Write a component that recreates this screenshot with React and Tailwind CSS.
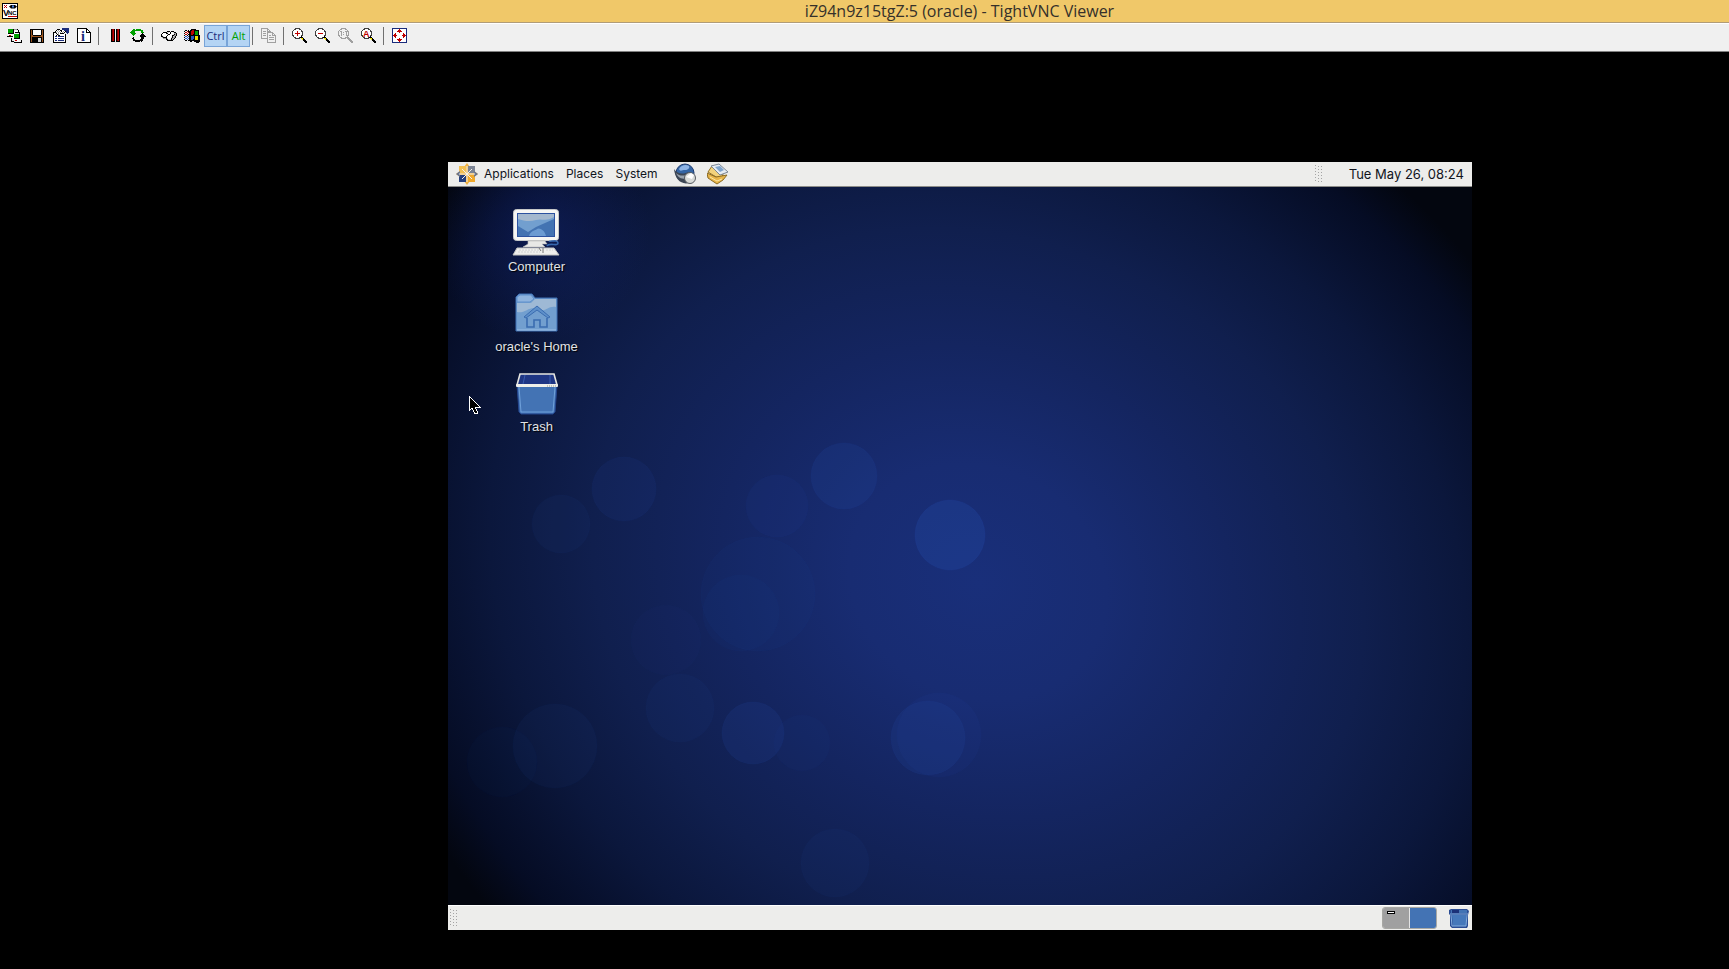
import React from 'react';

const PALETTE = {
  k: '#000000',
  w: '#ffffff',
  g: '#00a000',
  r: '#c00000',
  d: '#800000',
  n: '#1a2c7c',
  b: '#2a56c0',
  o: '#9a5420',
  y: '#f0e000',
  s: '#a0a0a0',
  l: '#d4d4d4',
};

// Every character is one pixel, a dot stays transparent
const PixelIcon = ({ rows, children }) => (
  <svg width="16" height="16" viewBox="0 0 16 16" shapeRendering="crispEdges" aria-hidden="true">
    {rows.map((row, y) =>
      [...row].map((c, x) =>
        PALETTE[c] ? <rect key={`${x}-${y}`} x={x} y={y} width="1" height="1" fill={PALETTE[c]} /> : null
      )
    )}
    {children}
  </svg>
);

const CONNECT = [
  '................',
  '.gggggksssk.....',
  'wgggggk....k....',
  'wgggggkwwwwk....',
  'wgggggkwkkkkk...',
  'wkkkkkkw....k...',
  '.wwww.wgggggk...',
  '..rr..wgggggk...',
  'kkkkkkwgggggk...',
  '......wgggggk...',
  '....k.wkkkkkk...',
  '....k..wwwww....',
  '....k...rrww..k.',
  '....kkk.wwwww.k.',
  '.......kkkkkkkk.',
];

const SAVE = [
  '................',
  'kkkkkkkkkkkkkk..',
  'kokwwwwwwwwkok..',
  'kokwwwwwwwwkok..',
  'kokwwwwwwwwkok..',
  'kokwwwwwwwwkok..',
  'kokwwwwwwwwkok..',
  'kookkkkkkkkook..',
  'kooooooooooook..',
  'kokkkkkkkkkkok..',
  'kokkkkkklllkok..',
  'kokkkkkklllkok..',
  'kokkkkkklllkok..',
  'kokkkkkklllkok..',
  'kkkkkkkkkkkkkk..',
];

const PROPERTIES = [
  '.........nnnnnnn',
  '....kkk..nnnnnnn',
  '...kwswkkwwnnnnn',
  '..kwswswkwswknnn',
  'kkkswswswswk.nnn',
  'kwwkwswkkkk...n.',
  'kwwwkswwwwwwk...',
  'kwwkwkkwwwwwk...',
  'kwnnwnnnnnnwk...',
  'kwwwwwwwwwwwk...',
  'kwnnwnnnnnnwk...',
  'kwwwwwwwwwwwk...',
  'kwnnwnnnnnnwk...',
  'kwwwwwwwwwwwk...',
  'kkkkkkkkkkkkk...',
];

const PAGE = [
  '.kkkkkkkkkk.....',
  '.kwwwwwwwwkk....',
  '.kwwwwwwwwkwk...',
  '.kwwwwwwwwkwwk..',
  '.kwwwwwwwwkkkkk.',
  '.kwwwwwwwwwwwwk.',
  '.kwwwwwwwwwwwwk.',
  '.kwwwwwwwwwwwwk.',
  '.kwwwwwwwwwwwwk.',
  '.kwwwwwwwwwwwwk.',
  '.kwwwwwwwwwwwwk.',
  '.kwwwwwwwwwwwwk.',
  '.kwwwwwwwwwwwwk.',
  '.kwwwwwwwwwwwwk.',
  '.kkkkkkkkkkkkkk.',
];

const PAUSE = [
  '................',
  ...Array(12).fill('....kdrk.kdrk...'),
  '....kkkk.kkkk...',
];

const REFRESH = [
  '................',
  '...gg.ggggg.....',
  '..ggggggggggg...',
  '.gggg......gg...',
  'ggggg......ggg..',
  '.ggggg......k...',
  '..ggg......kkk..',
  '...g......kkkkk.',
  '..........kkkkkk',
  '...k.......kkk..',
  '..kk.......kkk..',
  '...kk.....kkk...',
  '...kkkkkkkkkk...',
  '.....kkkkk.k....',
];

const KEYS = [
  '................',
  '................',
  '................',
  '......kkk.kkk...',
  '..kkkkllwkwwlkk.',
  '.kwwwkkwwkwwwssk',
  'kwwwwwlkkwwwlksk',
  'klwwwwkwwwwkkssk',
  'kklwwkwwwwwklsk.',
  '.skkkkwwwwlkssk.',
  '..sssklwwwkssk..',
  '.....kklllksk...',
  '......kkkkkk....',
  '................',
];

const WINDOWS = [
  '................',
  '.......kkkkk....',
  '.kk.k.kkrrkkkkk.',
  'k..rkkkrrrkgggk.',
  '.rr.rkkrrrkgggk.',
  'k..r.kkrrrkgggk.',
  '.rr.kkkrrkkgggk.',
  'k..k.kkkkkkkkkkk',
  '.bb.bkkbbbkyyykk',
  'k..b.kkbbbkyyykk',
  '.bb.bkkbbbkyyykk',
  'k..b.kkbbkkyyykk',
  '.kk.kkkkkkkkkkkk',
  '......kk..kkkkkk',
  '............kkk.',
];

const COPY = [
  'sssssss.........',
  's.....ss........',
  's.....s.s.......',
  's.sss.ssss......',
  's.....ssssss....',
  's.sss.s....ss...',
  's.....s....s.s..',
  's.sss.s.ss.ssss.',
  's.....s.......s.',
  's.....s.sssss.s.',
  'sssssss.......s.',
  '......s.sssss.s.',
  '......s.......s.',
  '......s.......s.',
  '......sssssssss.',
];

const FULLSCREEN = [
  'nnnnnnnnnnnnnnn',
  'nwwwwwwrwwwwwwn',
  'nwwwwwrrrwwwwwn',
  'nwwwwrrrrrwwwwn',
  'nwwwwwwrwwwwwwn',
  'nwwrwwwwwwwrwwn',
  'nwrrwwwwwwwrrwn',
  'nrrrrwwwwwrrrrn',
  'nwrrwwwwwwwrrwn',
  'nwwrwwwwwwwrwwn',
  'nwwwwwwrwwwwwwn',
  'nwwwwrrrrrwwwwn',
  'nwwwwwrrrwwwwwn',
  'nwwwwwwrwwwwwwn',
  'nnnnnnnnnnnnnnn',
];

const Magnifier = ({ off, children }) => {
  const ink = off ? '#a0a0a0' : '#000000';
  return (
    <svg width="16" height="16" viewBox="0 0 16 16" shapeRendering="crispEdges" aria-hidden="true">
      <circle cx="5.5" cy="5.5" r="5" fill={off ? '#f0f0f0' : '#ffffff'} stroke={off ? ink : '#404040'} strokeWidth="1" />
      <path d="M9 9L15 15" stroke={ink} strokeWidth="2.4" />
      {!off && <path d="M9 10h2v2h-1v-1h-1z" fill="#f0e000" />}
      {children}
    </svg>
  );
};

const VncLogo = () => (
  <svg width="16" height="16" viewBox="0 0 16 16" aria-hidden="true">
    <rect x="0.5" y="0.5" width="15" height="15" fill="#fff" stroke="#000" />
    <path d="M2 2l3 3M5 2L2 5" stroke="#c00000" strokeWidth="1" />
    <path d="M7 3.500L9 2h4l2 1.500L13 5.500H9z" fill="#000" />
    <rect x="10" y="2.500" width="2" height="2" fill="#4a80e0" />
    <text x="1" y="13" fontSize="9" fontWeight="700" fontFamily="Liberation Sans, sans-serif">V</text>
    <text x="6" y="12" fontSize="6" fontWeight="700" fontFamily="Liberation Sans, sans-serif">NC</text>
    <path d="M6 13.500h9" stroke="#c00000" />
  </svg>
);

const ToolButton = ({ label, children }) => (
  <button type="button" title={label} aria-label={label} className="flex h-[22px] w-[23px] items-center pl-[3px]">
    {children}
  </button>
);

const KeyToggle = ({ className, children }) => (
  <button
    type="button"
    aria-pressed="true"
    className={`flex h-[22px] w-[23px] items-center justify-center border border-[#78a4d8] bg-[#b4d4f4] font-['Open_Sans','Noto_Sans',sans-serif] text-[11px] ${className}`}
  >
    {children}
  </button>
);

const Separator = () => (
  <div className="flex h-[22px] w-2 items-center pl-[2px]">
    <div className="h-[18px] w-px bg-[#707070]" />
  </div>
);

const TitleBar = () => (
  <header className="flex h-[23px] items-center border-b border-[#b09c78] bg-[#f0c869] pl-[2px]">
    <VncLogo />
    <h1 className="flex-1 pl-[172px] text-center font-['Open_Sans','Noto_Sans',sans-serif] text-[16px] leading-5 text-[#35302a]">
      iZ94n9z15tgZ:5 (oracle) - TightVNC Viewer
    </h1>
  </header>
);

const Toolbar = () => (
  <div role="toolbar" className="flex h-[29px] items-start border-b border-t border-b-[#808080] border-t-white bg-[#f0f0f0] pl-1 pt-px">
    <ToolButton label="New connection"><PixelIcon rows={CONNECT} /></ToolButton>
    <ToolButton label="Save session"><PixelIcon rows={SAVE} /></ToolButton>
    <ToolButton label="Connection options"><PixelIcon rows={PROPERTIES} /></ToolButton>
    <ToolButton label="Connection info">
      <PixelIcon rows={PAGE}>
        <text x="5" y="13" fontSize="14" fontWeight="700" fill="#1a2c7c" fontFamily="Liberation Serif, serif">i</text>
      </PixelIcon>
    </ToolButton>
    <Separator />
    <ToolButton label="Pause"><PixelIcon rows={PAUSE} /></ToolButton>
    <ToolButton label="Refresh"><PixelIcon rows={REFRESH} /></ToolButton>
    <Separator />
    <ToolButton label="Send Ctrl-Alt-Del"><PixelIcon rows={KEYS} /></ToolButton>
    <ToolButton label="Send Ctrl-Esc"><PixelIcon rows={WINDOWS} /></ToolButton>
    <KeyToggle className="text-[#1a2c7c]">Ctrl</KeyToggle>
    <KeyToggle className="text-[#00a000]">Alt</KeyToggle>
    <Separator />
    <ToolButton label="Transfer files"><PixelIcon rows={COPY} /></ToolButton>
    <Separator />
    <ToolButton label="Zoom in">
      <Magnifier><path d="M3 5h5v1H3zM5 3h1v5H5z" fill="#c00000" /></Magnifier>
    </ToolButton>
    <ToolButton label="Zoom out">
      <Magnifier><path d="M3 5h5v1H3z" fill="#c00000" /></Magnifier>
    </ToolButton>
    <ToolButton label="Zoom 100%">
      <Magnifier off><path d="M2 3h2v5H3V4H2zM7 3h2v5H8V4H7zM5 4h1v1H5zM5 6h1v1H5z" fill="#a0a0a0" /></Magnifier>
    </ToolButton>
    <ToolButton label="Zoom auto">
      <Magnifier>
        <text x="2" y="9" fontSize="9" fontWeight="700" fill="#c00000" fontFamily="Liberation Sans, sans-serif">A</text>
      </Magnifier>
    </ToolButton>
    <Separator />
    <ToolButton label="Full screen"><PixelIcon rows={FULLSCREEN} /></ToolButton>
  </div>
);

const BUBBLES = [
  { x: 176, y: 327, r: 32, o: 0.1 },
  { x: 113, y: 362, r: 29, o: 0.07 },
  { x: 329, y: 344, r: 31, o: 0.08 },
  { x: 396, y: 314, r: 33, o: 0.16 },
  { x: 502, y: 373, r: 35, o: 0.26 },
  { x: 293, y: 451, r: 38, o: 0.06 },
  { x: 310, y: 432, r: 57, o: 0.06 },
  { x: 218, y: 478, r: 35, o: 0.04 },
  { x: 232, y: 546, r: 34, o: 0.07 },
  { x: 305, y: 571, r: 31, o: 0.15 },
  { x: 354, y: 581, r: 28, o: 0.05 },
  { x: 107, y: 584, r: 42, o: 0.07 },
  { x: 54, y: 600, r: 35, o: 0.03 },
  { x: 480, y: 576, r: 37, o: 0.15 },
  { x: 491, y: 573, r: 42, o: 0.08 },
  { x: 387, y: 701, r: 34, o: 0.07 },
];

const Wallpaper = () => (
  <svg className="absolute inset-0 h-full w-full" viewBox="0 0 1024 768" preserveAspectRatio="none" aria-hidden="true">
    <defs>
      <radialGradient id="sky" gradientUnits="userSpaceOnUse" cx="0" cy="0" r="1" gradientTransform="translate(530 420) rotate(27) scale(660 570)">
        <stop offset="0" stopColor="#192f7a" />
        <stop offset="0.2" stopColor="#182c72" />
        <stop offset="0.4" stopColor="#142560" />
        <stop offset="0.6" stopColor="#101f4e" />
        <stop offset="0.76" stopColor="#0b173c" />
        <stop offset="0.92" stopColor="#050c24" />
        <stop offset="1" stopColor="#03060f" />
      </radialGradient>
      <radialGradient id="glow">
        <stop offset="0" stopColor="#14287a" stopOpacity="0.45" />
        <stop offset="1" stopColor="#14287a" stopOpacity="0" />
      </radialGradient>
    </defs>
    <rect width="1024" height="768" fill="url(#sky)" />
    <circle cx="92" cy="70" r="110" fill="url(#glow)" />
    {BUBBLES.map((b) => (
      <circle key={`${b.x}-${b.y}`} cx={b.x} cy={b.y} r={b.r} fill="#2850b0" fillOpacity={b.o} stroke="#2850b0" strokeOpacity={b.o / 2} />
    ))}
  </svg>
);

const Grip = () => (
  <svg width="8" height="22" viewBox="0 0 8 22" shapeRendering="crispEdges" aria-hidden="true">
    {[3, 6, 9, 12, 15, 18].map((y) => (
      <path key={y} d={`M1 ${y - 1}h1v1h-1zM4 ${y}h1v1h-1zM7 ${y}h1v1h-1z`} fill="#a4a4a4" />
    ))}
  </svg>
);

const AppsLogo = () => (
  <svg width="22" height="22" viewBox="0 0 22 22" aria-hidden="true">
    <path d="M11 0l3 4h4v4l4 3-4 3v4h-4l-3 4-3-4H4v-4l-4-3 4-3V4h4z" fill="#efb040" />
    <path d="M3 3h7v7H3z" fill="#f3c052" />
    <path d="M12 3h7v7h-7z" fill="#7c8494" />
    <path d="M3 12h7v7H3z" fill="#26407e" />
    <path d="M12 12h7v7h-7z" fill="#f0a92c" />
    <path d="M0 11l4-3v6zM22 11l-4-3v6z" fill="#6a7690" />
    <path d="M11 3v16M3 11h16M6 6l10 10M16 6L6 16" stroke="#f4f2ea" strokeWidth="1" />
  </svg>
);

const GlobeIcon = () => (
  <svg width="22" height="22" viewBox="0 0 22 22" aria-hidden="true">
    <circle cx="11" cy="10" r="9" fill="#3465a4" stroke="#1c3a6e" />
    <path d="M5 6c2-4 7-5 10-3 1 2-1 4-4 4S6 9 5 6z" fill="#8db4e6" />
    <path d="M0 6c4 6 10 5 15 3l-3 4 3 7c-8 2-14-4-15-14z" fill="#3c4654" />
    <path d="M2 10c3 3 7 3 10 2l1 3c-6 2-9-1-11-5z" fill="#9aa4ae" />
    <circle cx="16" cy="15" r="5.500" fill="#d9dbd8" stroke="#555a60" />
    <path d="M12 14l5-4 3 2-2 4z" fill="#ffffff" />
  </svg>
);

const NoteIcon = () => (
  <svg width="22" height="22" viewBox="0 0 22 22" aria-hidden="true">
    <path d="M1 9l4-6 12 5-3 9z" fill="#f2d27c" stroke="#927024" />
    <path d="M4 3l8-2 9 8-8 3z" fill="#e6ecf2" stroke="#7a8694" />
    <path d="M8 4l5-1 4 4-4 2z" fill="#7fa4cc" />
    <path d="M0 10l9 4 11-2-4 5-6 4-9-6z" fill="#e8b64a" stroke="#8a6a22" />
    <path d="M3 14l7 4 5-2" fill="none" stroke="#fbe7a8" />
  </svg>
);

const ComputerIcon = () => (
  <svg width="48" height="48" viewBox="0 0 48 48" aria-hidden="true">
    <rect x="1.500" y="1.500" width="45" height="31" rx="3" fill="#f6f6f4" stroke="#c6c8c8" />
    <rect x="5" y="5" width="38" height="24" fill="#2c52a0" />
    <rect x="6" y="6" width="36" height="22" fill="#729fcf" />
    <path d="M6 6h36v3c-8 5-12 1-18 3S12 13 6 11z" fill="#a4b8ce" />
    <path d="M6 18l10 6 8-5 18-8v17H6z" fill="#4373b2" />
    <path d="M17 28c2-6 6-5 8-7s8 1 9 7z" fill="#6b9bd2" />
    <path d="M16 33h17l2 3h-5l3 3H11l5-3z" fill="#e8e8e6" stroke="#b8bab8" strokeWidth="0.6" />
    <path d="M35 38c2-4 11 1 11-3s-8-1-9-2" fill="none" stroke="#3768ae" strokeWidth="1.600" />
    <path d="M5 40h37l5 7H1z" fill="#efefed" stroke="#c4c4c2" />
    <path d="M7 42h21M6 44h22M34 42h7" stroke="#d0d2d2" strokeDasharray="2 1" />
    <path d="M27 40l2 3M31 40v5" stroke="#777" />
  </svg>
);

const HomeIcon = () => (
  <svg width="48" height="48" viewBox="0 0 48 48" aria-hidden="true">
    <path d="M3 43V9l3-3h13l3 4h22v33z" fill="#729fcf" stroke="#3f70b4" />
    <path d="M4 14V9l3-2h11l3 4-4 3z" fill="#8fb4de" stroke="#5f90cc" />
    <path d="M4 15h14l4-4h21v8c-8-2-10 6-18 2S12 26 4 24z" fill="#a6bdd6" opacity="0.85" />
    <path d="M11 29l13-11 13 11-2 1-11-8-11 8z" fill="#5e90ca" stroke="#3a6cb0" />
    <path d="M14 30v9h7v-7h6v7h7v-9" fill="none" stroke="#3a6cb0" strokeWidth="1.600" />
    <path d="M4 42h39" stroke="#9fc0e6" />
  </svg>
);

const TrashIcon = () => (
  <svg width="48" height="48" viewBox="0 0 48 48" aria-hidden="true">
    <path d="M4 17h40l-2 27-2 2H8l-2-2z" fill="#4373b4" stroke="#23448c" />
    <path d="M6 19l2 25h32l2-25" fill="none" stroke="#6fa0da" />
    <path d="M7 6h34l3 11H4z" fill="#1f3684" stroke="#e6e6e0" strokeWidth="1.600" />
    <path d="M12 7l-2 9M37 7v9" stroke="#3a5cae" />
    <rect x="3" y="16" width="42" height="3" rx="1" fill="#f0f0ea" />
    <path d="M34 18h9" stroke="#9a9a90" strokeDasharray="1 1" />
  </svg>
);

const TrashApplet = () => (
  <svg width="20" height="20" viewBox="0 0 20 20" aria-hidden="true">
    <path d="M0 2l2-1h16l2 2-1 4v11l-1 2H3l-2-2V7L0 6z" fill="#2a4c94" />
    <path d="M3 7h14v11H4z" fill="#4678ba" />
    <path d="M1 6h18M2 7l1 11h14l1-11" fill="none" stroke="#84aede" />
    <path d="M2 2h16v3H2z" fill="#4373b4" />
    <path d="M3 2h7v3H3z" fill="#1b3178" />
  </svg>
);

const TopPanel = () => (
  <nav className="relative flex h-[25px] items-center border-b border-[#8c8c88] bg-[#ededeb] pl-2 pr-2 font-[Inter,'Liberation_Sans',sans-serif] text-[12px] leading-4 text-[#10141c]">
    <button type="button" className="flex items-center gap-[6px]">
      <AppsLogo />
      Applications
    </button>
    <button type="button" className="ml-3">Places</button>
    <button type="button" className="ml-3">System</button>
    <button type="button" aria-label="Web browser" className="ml-4"><GlobeIcon /></button>
    <button type="button" aria-label="Mail" className="ml-[11px]"><NoteIcon /></button>
    <div className="ml-auto mr-[27px]"><Grip /></div>
    <time dateTime="05-26T08:24" className="text-[13px]">Tue May 26, 08:24</time>
  </nav>
);

const SHORTCUTS = [
  { label: 'Computer', icon: <ComputerIcon /> },
  { label: "oracle's Home", icon: <HomeIcon /> },
  { label: 'Trash', icon: <TrashIcon /> },
];

const Shortcuts = () => (
  <ul className="relative flex w-[177px] flex-1 flex-col items-center pt-[21px]">
    {SHORTCUTS.map((s) => (
      <li key={s.label} className="h-20">
        <button
          type="button"
          className="flex flex-col items-center gap-[2px] font-['Liberation_Sans',sans-serif] text-[13px] leading-[18px] text-[#e0e3e8] [text-shadow:1px_1px_1px_#000]"
        >
          {s.icon}
          {s.label}
        </button>
      </li>
    ))}
  </ul>
);

const BottomPanel = () => (
  <footer className="relative flex h-[25px] items-center border-t border-white bg-[#ededeb] pl-px pr-[3px]">
    <Grip />
    <div className="ml-auto mr-3 grid h-[22px] w-[55px] grid-cols-2 gap-px overflow-hidden rounded-[3px] border border-[#a8a8a4] bg-[#e4e4e4]">
      <button type="button" aria-label="Workspace 1" className="flex items-start bg-[#a0a0a0] pl-1 pt-[3px]">
        <span className="h-[3px] w-2 border border-black bg-white" />
      </button>
      <button type="button" aria-label="Workspace 2" className="bg-[#4373b4]" />
    </div>
    <button type="button" aria-label="Trash"><TrashApplet /></button>
  </footer>
);

const Cursor = () => (
  <svg className="absolute left-[20px] top-[233px]" width="14" height="20" viewBox="0 0 14 20" shapeRendering="crispEdges" aria-hidden="true">
    <path d="M1 1v15l3-3 3 6 3-1-3-6h5z" fill="#000" stroke="#fff" />
  </svg>
);

export default function App() {
  return (
    <div className="flex min-h-screen flex-col bg-black">
      <TitleBar />
      <Toolbar />
      <main className="flex flex-1 items-start pl-[448px] pr-[257px] pt-[110px]">
        <section aria-label="Remote desktop" className="relative flex aspect-[4/3] flex-1 flex-col overflow-hidden">
          <Wallpaper />
          <TopPanel />
          <Shortcuts />
          <BottomPanel />
          <Cursor />
        </section>
      </main>
    </div>
  );
}
